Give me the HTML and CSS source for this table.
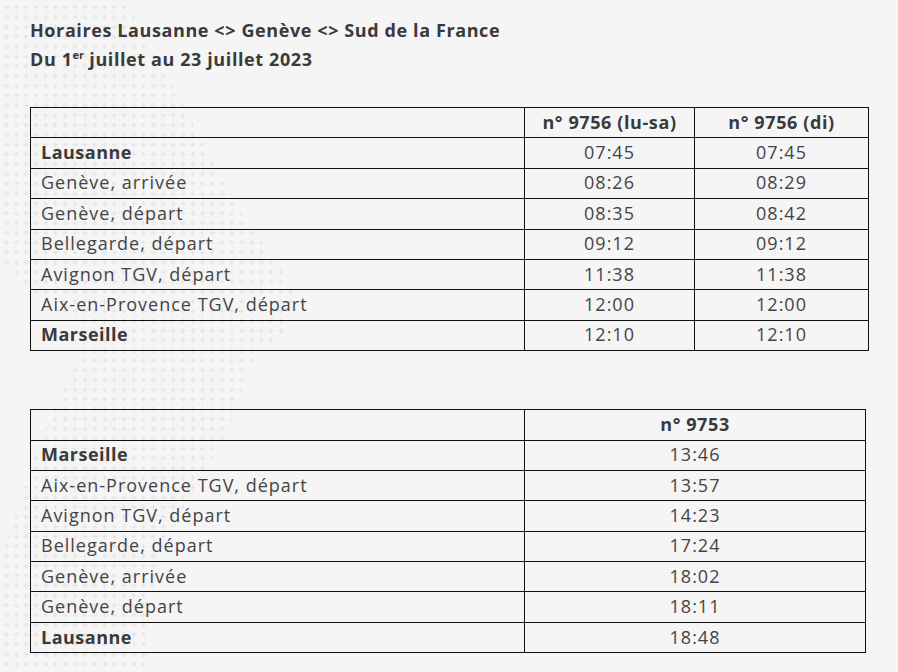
FILE: index.html
```html
<!DOCTYPE html>
<html lang="fr">
<head>
<meta charset="utf-8">
<link rel="stylesheet" href="styles.css">
</head>
<body>
<svg class="bg-pattern" width="320" height="672" viewBox="0 0 320 672" aria-hidden="true">
  <defs>
    <pattern id="plus" width="9.8" height="9.8" patternUnits="userSpaceOnUse" x="2" y="3">
      <path d="M2 4.5h5M4.5 2v5" stroke="#dcdcdc" stroke-width="1" fill="none"/>
    </pattern>
  </defs>
  <polygon points="0,0 125,0 175,90 240,210 295,290 285,330 250,370 225,440 200,480 165,540 150,600 150,672 0,672 0,560 40,440 90,330 40,300 0,260" fill="url(#plus)"/>
</svg>
<div class="page">
  <h1 class="title">Horaires Lausanne &lt;&gt; Genève &lt;&gt; Sud de la France<br>Du 1<sup>er</sup> juillet au 23 juillet 2023</h1>

  <table class="timetable t1">
    <colgroup><col class="c-stop"><col class="c-a"><col class="c-b"></colgroup>
    <tr><th></th><th>n° 9756 (lu-sa)</th><th>n° 9756 (di)</th></tr>
    <tr><td class="stop strong">Lausanne</td><td>07:45</td><td>07:45</td></tr>
    <tr><td class="stop">Genève, arrivée</td><td>08:26</td><td>08:29</td></tr>
    <tr><td class="stop">Genève, départ</td><td>08:35</td><td>08:42</td></tr>
    <tr><td class="stop">Bellegarde, départ</td><td>09:12</td><td>09:12</td></tr>
    <tr><td class="stop">Avignon TGV, départ</td><td>11:38</td><td>11:38</td></tr>
    <tr><td class="stop">Aix-en-Provence TGV, départ</td><td>12:00</td><td>12:00</td></tr>
    <tr><td class="stop strong">Marseille</td><td>12:10</td><td>12:10</td></tr>
  </table>

  <table class="timetable t2">
    <colgroup><col class="c-stop"><col class="c-wide"></colgroup>
    <tr><th></th><th>n° 9753</th></tr>
    <tr><td class="stop strong">Marseille</td><td>13:46</td></tr>
    <tr><td class="stop">Aix-en-Provence TGV, départ</td><td>13:57</td></tr>
    <tr><td class="stop">Avignon TGV, départ</td><td>14:23</td></tr>
    <tr><td class="stop">Bellegarde, départ</td><td>17:24</td></tr>
    <tr><td class="stop">Genève, arrivée</td><td>18:02</td></tr>
    <tr><td class="stop">Genève, départ</td><td>18:11</td></tr>
    <tr><td class="stop strong">Lausanne</td><td>18:48</td></tr>
  </table>
</div>
</body>
</html>
```

FILE: styles.css
```css
html, body {
  margin: 0;
  padding: 0;
  background: #f5f5f5;
}
body {
  position: relative;
  font-family: "Open Sans", "Liberation Sans", sans-serif;
  color: #333;
  width: 898px;
  height: 672px;
  overflow: hidden;
}
.bg-pattern {
  position: absolute;
  left: 0;
  top: 0;
  z-index: 0;
  opacity: 0.7;
}
.page {
  position: relative;
  z-index: 1;
  padding: 16px 0 0 30px;
}
.title {
  margin: 0;
  font-size: 18px;
  font-weight: 700;
  line-height: 29px;
  color: #3a3a3a;
  letter-spacing: 0.6px;
}
.title sup {
  font-size: 11px;
  line-height: 0;
  vertical-align: 7px;
  letter-spacing: 0;
}
.timetable {
  border-collapse: collapse;
  table-layout: fixed;
  font-size: 18px;
  color: #444;
}
.timetable th,
.timetable td {
  border: 1px solid #111;
  height: 27.4px;
  padding: 0 10px 2px;
  text-align: center;
  font-weight: 400;
  line-height: 18px;
  letter-spacing: 1px;
}
.timetable th {
  font-weight: 700;
  letter-spacing: 0.6px;
  color: #3a3a3a;
}
.timetable td.stop {
  text-align: left;
}
.timetable td.strong {
  font-weight: 700;
  letter-spacing: 0.5px;
  color: #3a3a3a;
}
.t1 {
  margin-top: 33px;
  width: 838px;
}
.t2 {
  margin-top: 58px;
  width: 835px;
}
.c-stop { width: 494px; }
.c-a { width: 170px; }
.c-b { width: 174px; }
.c-wide { width: 341px; }
```
